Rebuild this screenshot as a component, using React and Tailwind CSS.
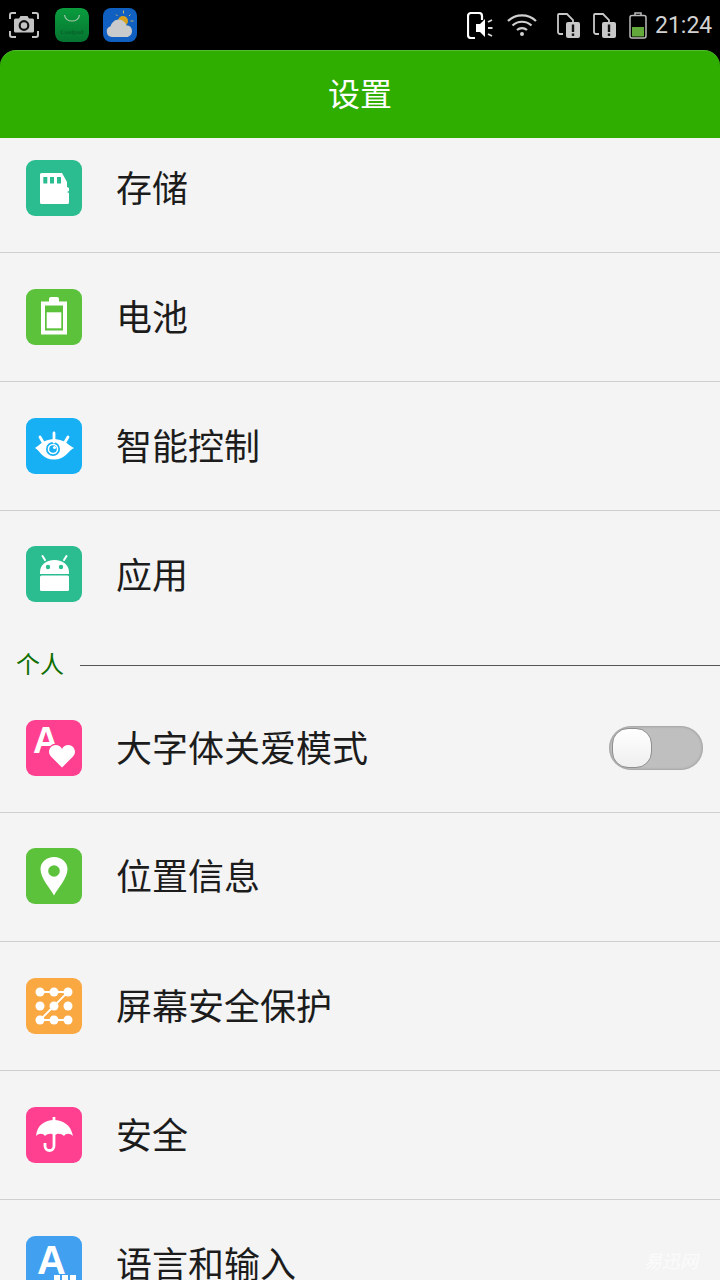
import React from "react";

const cjk = "font-['Noto_Sans_CJK_SC','Noto_Sans',sans-serif]";

const SdIcon = () => (
  <>
    <path d="M15.500 13H36l5 9v5l2 1v3l-2 1 2 1v9.500a1.500 1.500 0 0 1-1.500 1.500h-26a1.500 1.500 0 0 1-1.500-1.500v-28A1.500 1.500 0 0 1 15.500 13z" fill="#fff" />
    <rect x="17.300" y="17" width="4" height="6.500" fill="#2bbd90" />
    <rect x="24" y="17" width="4" height="6.500" fill="#2bbd90" />
    <rect x="31" y="17" width="4" height="6.500" fill="#2bbd90" />
  </>
);

const BatteryIcon = () => (
  <>
    <path d="M23 10a2 2 0 0 1 2-2h6a2 2 0 0 1 2 2v3h-10z" fill="#fff" />
    <rect x="17" y="14.500" width="22" height="29" fill="none" stroke="#fff" strokeWidth="4" />
    <rect x="20.700" y="23.300" width="14.600" height="16" fill="#fff" />
  </>
);

const EyeIcon = () => (
  <>
    <path d="M9 30 C 14 27, 17 21.500, 28 21 C 39 21.500, 42 27, 48 30 C 42 33, 39 41.500, 28 41.500 C 17 41.500, 14 33, 9 30z" fill="#fff" />
    <circle cx="27" cy="31" r="7" fill="#17b0f5" />
    <circle cx="27" cy="31" r="5.300" fill="#fff" />
    <circle cx="27" cy="31" r="3.800" fill="#17b0f5" />
    <circle cx="28.500" cy="29.500" r="1.500" fill="#fff" />
    <path d="M28 15v9M14 19l3.500 6M42 19l-3.500 6" stroke="#fff" strokeWidth="2.800" strokeLinecap="round" fill="none" />
  </>
);

const AndroidIcon = () => (
  <>
    <path d="M14 28v-2c0-7 6-12 14.500-12S43 19 43 26v2z" fill="#fff" />
    <path d="M19 14l-2.500-4M38 14l2.500-4" stroke="#fff" strokeWidth="2" strokeLinecap="round" />
    <circle cx="22" cy="21" r="2.200" fill="#2bbd90" />
    <circle cx="35" cy="21" r="2.200" fill="#2bbd90" />
    <rect x="14" y="29.500" width="29" height="15.500" rx="1.500" fill="#fff" />
  </>
);

const CareIcon = () => (
  <>
    <text x="7" y="33" fontFamily="Liberation Sans, sans-serif" fontWeight="700" fontSize="36" fill="#fff">A</text>
    <path d="M36 47.500 L25 36.500 C 20.500 31.500 24.500 25 29.500 25 C 32.500 25 34.800 26.500 36 29 C 37.200 26.500 39.500 25 42.500 25 C 47.500 25 51.500 31.500 47 36.500z" fill="#fff" stroke="#ff4090" strokeWidth="2.400" paintOrder="stroke" />
  </>
);

const PinIcon = () => (
  <>
    <path d="M28 47.500 C 24 40 14.500 30.500 14.500 21 C 14.500 14 20.500 9 28 9 C 35.500 9 41.500 14 41.500 21 C 41.500 30.500 32 40 28 47.500z" fill="#fff" />
    <circle cx="28" cy="23" r="5.800" fill="#5cc23c" />
  </>
);

const PatternIcon = () => (
  <>
    <path d="M14 14h28L28 28 14 42h28" stroke="#fff" strokeWidth="1.800" fill="none" />
    {[14, 28, 42].map((y) =>
      [14, 28, 42].map((x) => <circle key={`${x}-${y}`} cx={x} cy={y} r="4.500" fill="#fff" />)
    )}
  </>
);

const UmbrellaIcon = () => (
  <>
    <path d="M10 29 C 11 18, 19 13, 28 13 C 37 13, 45 18, 47 29 C 44 26, 40 26, 38 29 C 35 26, 31 26, 28.500 28.500 C 26 26, 22 26, 19 29 C 17 26, 13 26, 10 29z" fill="#fff" />
    <path d="M28 10v29a4.500 4.500 0 0 1-9 0v-3" stroke="#fff" strokeWidth="2.800" fill="none" />
  </>
);

const LangIcon = () => (
  <>
    <text x="11" y="37.500" fontFamily="Liberation Sans, sans-serif" fontWeight="700" fontSize="40" fill="#fff">A</text>
    <rect x="28" y="39" width="6" height="8" fill="#fff" />
    <rect x="36" y="39" width="6" height="8" fill="#fff" />
    <rect x="44" y="39" width="6" height="8" fill="#fff" />
  </>
);

const IconTile = ({ bg, children }) => (
  <div className={`w-14 h-14 rounded-[9px] overflow-hidden shrink-0 ${bg}`}>
    <svg width="56" height="56" viewBox="0 0 56 56">{children}</svg>
  </div>
);

const Toggle = () => (
  <div className="absolute right-[17px] top-[42px] w-[94px] h-11 rounded-full bg-[#bfbfbf] shadow-[inset_0_0_3px_rgba(0,0,0,0.3)]">
    <div className="absolute left-[3px] top-[2px] w-[40px] h-[40px] rounded-[16px] bg-gradient-to-b from-[#ffffff] to-[#efefef] border border-[#8f8f8f]" />
  </div>
);

const Row = ({ label, bg, icon, first, last, tight, toggle }) => (
  <div
    className={`relative flex pl-[26px] border-[#cfcfcf] ${first ? "h-[115px] pt-[22px] border-b" : last ? "h-[81px] pt-9" : tight ? "h-[129px] pt-[35px] border-b" : "h-[129px] pt-9 border-b"}`}
  >
    <IconTile bg={bg}>{icon}</IconTile>
    <span className={`ml-[34px] h-14 leading-[52px] text-[36px] text-[#1c1c1c] ${cjk}`}>{label}</span>
    {toggle && <Toggle />}
  </div>
);

const StatusBar = () => (
  <div className="h-[50px] bg-black flex items-start">
    <svg className="ml-[9px] mt-3" width="30" height="26" viewBox="0 0 30 26" fill="none">
      <path d="M1 7V3a2 2 0 0 1 2-2h4M23 1h4a2 2 0 0 1 2 2v4M1 19v4a2 2 0 0 0 2 2h4M23 25h4a2 2 0 0 0 2-2v-4" stroke="#c4c4c4" strokeWidth="2" />
      <path d="M5 8a1.500 1.500 0 0 1 1.500-1.500H10L11.500 4h7L20 6.500h3.500A1.500 1.500 0 0 1 25 8v11a1.500 1.500 0 0 1-1.500 1.500h-17A1.500 1.500 0 0 1 5 19z" fill="#c4c4c4" />
      <circle cx="15" cy="13.500" r="4.300" fill="none" stroke="#111" strokeWidth="2.200" />
    </svg>
    <svg className="ml-4 mt-2 rounded-lg" width="34" height="34" viewBox="0 0 34 34">
      <defs>
        <linearGradient id="bagGrad" x1="0" y1="0" x2="0" y2="1">
          <stop offset="0" stopColor="#0a9c3e" />
          <stop offset="1" stopColor="#067430" />
        </linearGradient>
      </defs>
      <rect width="34" height="34" rx="8" fill="url(#bagGrad)" />
      <path d="M9.500 7c1 8 14 8 15 0" stroke="#a5c7ae" strokeWidth="1.200" fill="none" />
      <text x="17" y="26" textAnchor="middle" fontFamily="Liberation Serif, serif" fontWeight="700" fontSize="6.500" fill="#06642a">Coolpad</text>
    </svg>
    <svg className="ml-[14px] mt-2" width="34" height="34" viewBox="0 0 34 34">
      <rect width="34" height="34" rx="8" fill="#0f60c0" />
      <circle cx="20" cy="13" r="5" fill="#d8a21e" />
      <path d="M20.500 5.500v-3M14.500 8l-1.500-1.500M26 8l1.500-1.500M27.500 13h3" stroke="#c9b878" strokeWidth="1" />
      <path d="M9 29a5.500 5.500 0 0 1-1.500-10.700C9 13 14 10 18.500 12c3 1.300 4.500 3.500 5 5.500 3-.5 5.500 2 5.500 5.500 0 3.500-2.500 6-5.500 6z" fill="#c8cacc" />
    </svg>
    <div className="ml-auto flex items-start">
      <svg className="mt-3" width="26" height="27" viewBox="0 0 26 27" fill="none">
        <path d="M8 26H4a3 3 0 0 1-3-3V4a3 3 0 0 1 3-3h8a3 3 0 0 1 3 3v4" stroke="#fff" strokeWidth="2.200" />
        <path d="M9 12h4l5-5v18l-5-5H9z" fill="#fff" />
        <path d="M21 10l4-2M21 16h4.500M21 22l4 2" stroke="#ddd" strokeWidth="1.800" />
      </svg>
      <svg className="ml-[14px] mt-[14px]" width="30" height="22" viewBox="0 0 30 22" fill="none" stroke="#d0d0d0" strokeWidth="2.200">
        <path d="M1 7c8-7.500 20-7.500 28 0M5.500 11.500c5.500-5 13.500-5 19 0M10 16c2.800-2.500 7.200-2.500 10 0" />
        <circle cx="15" cy="20" r="2" fill="#d0d0d0" stroke="none" />
      </svg>
      {[20, 13].map((gap) => (
        <svg key={gap} className={gap === 20 ? "ml-5 mt-[13px]" : "ml-[13px] mt-[13px]"} width="23" height="25" viewBox="0 0 23 25" fill="none">
          <path d="M6 21H3a2 2 0 0 1-2-2V2a1 1 0 0 1 1-1h8l6 6v3" stroke="#c8c8c8" strokeWidth="1.800" />
          <rect x="9" y="9" width="14" height="16" rx="2" fill="#c8c8c8" />
          <rect x="14.800" y="11.500" width="2.400" height="7.500" fill="#111" />
          <rect x="14.800" y="20.500" width="2.400" height="2.400" fill="#111" />
        </svg>
      ))}
      <svg className="ml-[13px] mt-3" width="18" height="27" viewBox="0 0 18 27" fill="none">
        <path d="M6 3V1h6v2" stroke="#bbb" strokeWidth="1.500" />
        <rect x="1" y="3.500" width="16" height="22.500" rx="2" stroke="#bbb" strokeWidth="1.500" />
        <rect x="3" y="15" width="12" height="9.500" fill="#62a83a" />
      </svg>
      <span className="ml-2 mr-2 mt-[10px] w-[57px] text-[23px] leading-8 text-[#d2d2d2] font-['Roboto',sans-serif]">21:24</span>
    </div>
  </div>
);

export default function App() {
  return (
    <div className="relative w-[720px] h-[1280px] overflow-hidden bg-black">
      <StatusBar />
      <div className={`h-[88px] rounded-t-[16px] bg-[#2fae00] border-t border-[#52bd2c] flex items-start justify-center text-white text-[32px] leading-[82px] ${cjk}`}>
        设置
      </div>
      <div className="bg-[#f4f4f4] h-[1142px]">
        <Row first label="存储" bg="bg-[#2bbd90]" icon={<SdIcon />} />
        <Row label="电池" bg="bg-[#5cc23c]" icon={<BatteryIcon />} />
        <Row label="智能控制" bg="bg-[#17b0f5]" icon={<EyeIcon />} />
        <div className="relative flex h-[127px] pt-[35px] pl-[26px]">
          <IconTile bg="bg-[#2bbd90]"><AndroidIcon /></IconTile>
          <span className={`ml-[34px] h-14 leading-[54px] text-[36px] text-[#1c1c1c] ${cjk}`}>应用</span>
        </div>
        <div className="h-[46px] flex items-start pl-4">
          <span className={`text-[24px] leading-8 mt-[9px] text-[#0f6e00] ${cjk}`}>个人</span>
          <div className="ml-4 flex-1 h-px mt-[27px] bg-[#555]" />
        </div>
        <Row label="大字体关爱模式" bg="bg-[#ff4090]" icon={<CareIcon />} toggle />
        <Row tight label="位置信息" bg="bg-[#5cc23c]" icon={<PinIcon />} />
        <Row label="屏幕安全保护" bg="bg-[#f9a842]" icon={<PatternIcon />} />
        <Row label="安全" bg="bg-[#ff4090]" icon={<UmbrellaIcon />} />
        <Row last label="语言和输入" bg="bg-[#42a0f0]" icon={<LangIcon />} />
      </div>
      <span className={`absolute right-[22px] bottom-[8px] text-[18px] italic leading-6 text-white/70 ${cjk}`}>易迅网</span>
    </div>
  );
}
